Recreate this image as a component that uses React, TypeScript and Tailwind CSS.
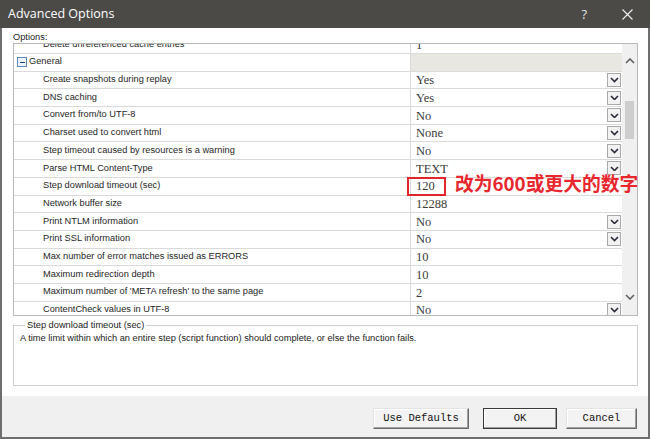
import React from 'react';

type Row = { name: string; value?: string; dd?: boolean; group?: boolean };

const rows: Row[] = [
  { name: 'Delete unreferenced cache entries', value: '1' },
  { name: 'General', group: true },
  { name: 'Create snapshots during replay', value: 'Yes', dd: true },
  { name: 'DNS caching', value: 'Yes', dd: true },
  { name: 'Convert from/to UTF-8', value: 'No', dd: true },
  { name: 'Charset used to convert html', value: 'None', dd: true },
  { name: 'Step timeout caused by resources is a warning', value: 'No', dd: true },
  { name: 'Parse HTML Content-Type', value: 'TEXT', dd: true },
  { name: 'Step download timeout (sec)', value: '120' },
  { name: 'Network buffer size', value: '12288' },
  { name: 'Print NTLM information', value: 'No', dd: true },
  { name: 'Print SSL information', value: 'No', dd: true },
  { name: 'Max number of error matches issued as ERRORS', value: '10' },
  { name: 'Maximum redirection depth', value: '10' },
  { name: "Maximum number of 'META refresh' to the same page", value: '2' },
  { name: 'ContentCheck values in UTF-8', value: 'No', dd: true },
];

function Chevron({ up, color, w = 8 }: { up?: boolean; color: string; w?: number }) {
  return (
    <svg width={w + 2} height={w / 2 + 2} viewBox={`0 0 ${w + 2} ${w / 2 + 2}`}>
      <polyline
        points={up ? `1,${w / 2 + 1} ${w / 2 + 1},1 ${w + 1},${w / 2 + 1}` : `1,1 ${w / 2 + 1},${w / 2 + 1} ${w + 1},1`}
        fill="none"
        stroke={color}
        strokeWidth="1.6"
      />
    </svg>
  );
}

function DropBtn() {
  return (
    <div className="w-[14px] h-[14px] mr-[1px] border border-[#a9a9a9] bg-[#f2f2f2] flex items-center justify-center shrink-0">
      <Chevron color="#2a2a3a" w={7} />
    </div>
  );
}

function MinusBox() {
  return (
    <div className="w-[10px] h-[10px] border border-[#5b86c4] bg-[#eef4fb] flex items-center justify-center shrink-0">
      <div className="w-[5px] h-[1px] bg-[#23457a]" />
    </div>
  );
}

export default function App() {
  return (
    <div className="w-[650px] h-[439px] flex flex-col overflow-hidden relative bg-white font-['Liberation_Sans',Arial,sans-serif]">
      {/* Title bar */}
      <div className="h-[28px] shrink-0 bg-[#4b4a47] flex items-center pl-[8px] text-white">
        <span className="text-[12.5px] font-['Open_Sans',sans-serif] leading-none">Advanced Options</span>
        <span className="ml-auto mr-[35px] text-[13px] font-['Open_Sans',sans-serif] text-[#e6e6e6] leading-none">?</span>
        <svg width="11" height="11" viewBox="0 0 11 11" className="mr-[17px]">
          <path d="M0.5 0.5 L10.5 10.5 M10.5 0.5 L0.5 10.5" stroke="#f2f2f2" strokeWidth="1.1" fill="none" />
        </svg>
      </div>

      {/* Body */}
      <div className="flex-1 flex flex-col border-x-2 border-b-2 border-[#6e6e6e]">
        <div className="flex-1 bg-white pl-[11px] pr-[10px] pt-[3px] flex flex-col">
          <div className="text-[9.25px] leading-[12px] text-[#222]">Options:</div>

          {/* Property list */}
          <div className="h-[273px] border border-[#b9b9b9] flex overflow-hidden">
            <div className="flex-1 overflow-hidden">
              <div className="mt-[-7.7px]">
                {rows.map((r, i) => (
                  <div key={i} className="h-[17.7px] flex border-b border-[#dadada]">
                    <div
                      className={`w-[397px] shrink-0 border-r border-[#dadada] flex items-center text-[9.25px] text-[#1e1e1e] whitespace-nowrap ${
                        r.group ? 'pl-[3px] gap-[2px]' : 'pl-[29px]'
                      }`}
                    >
                      {r.group && <MinusBox />}
                      <span>{r.name}</span>
                    </div>
                    <div
                      className={`flex-1 flex items-center justify-between pl-[5px] ${
                        r.group ? 'bg-[#e9e7e1]' : 'bg-white'
                      }`}
                    >
                      <span className="font-['Liberation_Serif',serif] text-[12.5px] text-[#3a3a3a] leading-none pt-[1px]">
                        {r.value}
                      </span>
                      {r.dd && <DropBtn />}
                    </div>
                  </div>
                ))}
              </div>
            </div>
            {/* Scrollbar */}
            <div className="w-[15px] shrink-0 bg-[#f0f0f0] flex flex-col">
              <div className="h-[34px] flex items-center justify-center">
                <Chevron up color="#606060" w={8} />
              </div>
              <div className="mt-[23px] h-[38px] mx-[3px] bg-[#cdcdcd]" />
              <div className="flex-1" />
              <div className="h-[36px] flex items-center justify-center">
                <Chevron color="#606060" w={8} />
              </div>
            </div>
          </div>

          {/* Description group */}
          <fieldset className="mt-[3px] h-[67px] border border-[#cfcfcf] px-[6px] pb-0 pt-0 m-0">
            <legend className="ml-[5px] px-[2px] text-[9.25px] leading-[12px] text-[#222]">
              Step download timeout (sec)
            </legend>
            <div className="text-[9.25px] leading-[12px] text-[#222] pt-[1px]">
              A time limit within which an entire step (script function) should complete, or else the function fails.
            </div>
          </fieldset>
        </div>

        {/* Button bar */}
        <div className="h-[41px] shrink-0 bg-[#f0f0f0] flex items-start pt-[12px] pl-[371px] font-['Liberation_Mono',monospace] text-[10.5px] text-[#111]">
          <div className="w-[96px] h-[21px] flex items-center justify-center bg-[#f3f3f3] border border-t-[#e3e3e3] border-l-[#e3e3e3] border-b-[#6a6a6a] border-r-[#6a6a6a] shadow-[inset_-1px_-1px_0_#a0a0a0,inset_1px_1px_0_#ffffff]">
            Use Defaults
          </div>
          <div className="ml-[14px] w-[74px] h-[21px] flex items-center justify-center bg-[#f3f3f3] border border-[#3a3a3a] shadow-[inset_-1px_-1px_0_#a0a0a0,inset_1px_1px_0_#ffffff]">
            OK
          </div>
          <div className="ml-[9px] w-[71px] h-[21px] flex items-center justify-center bg-[#f3f3f3] border border-t-[#e3e3e3] border-l-[#e3e3e3] border-b-[#6a6a6a] border-r-[#6a6a6a] shadow-[inset_-1px_-1px_0_#a0a0a0,inset_1px_1px_0_#ffffff]">
            Cancel
          </div>
        </div>
      </div>

      {/* Red annotation overlay */}
      <div className="absolute left-[407px] top-[177px] w-[39px] h-[19px] border-2 border-[#e0262b]" />
      <div className="absolute left-[455px] top-[172px] text-[18.75px] leading-[22px] font-bold text-[#e8262e] font-['Noto_Sans_CJK_SC','Noto_Sans',sans-serif] whitespace-nowrap">
        改为600或更大的数字
      </div>
    </div>
  );
}
